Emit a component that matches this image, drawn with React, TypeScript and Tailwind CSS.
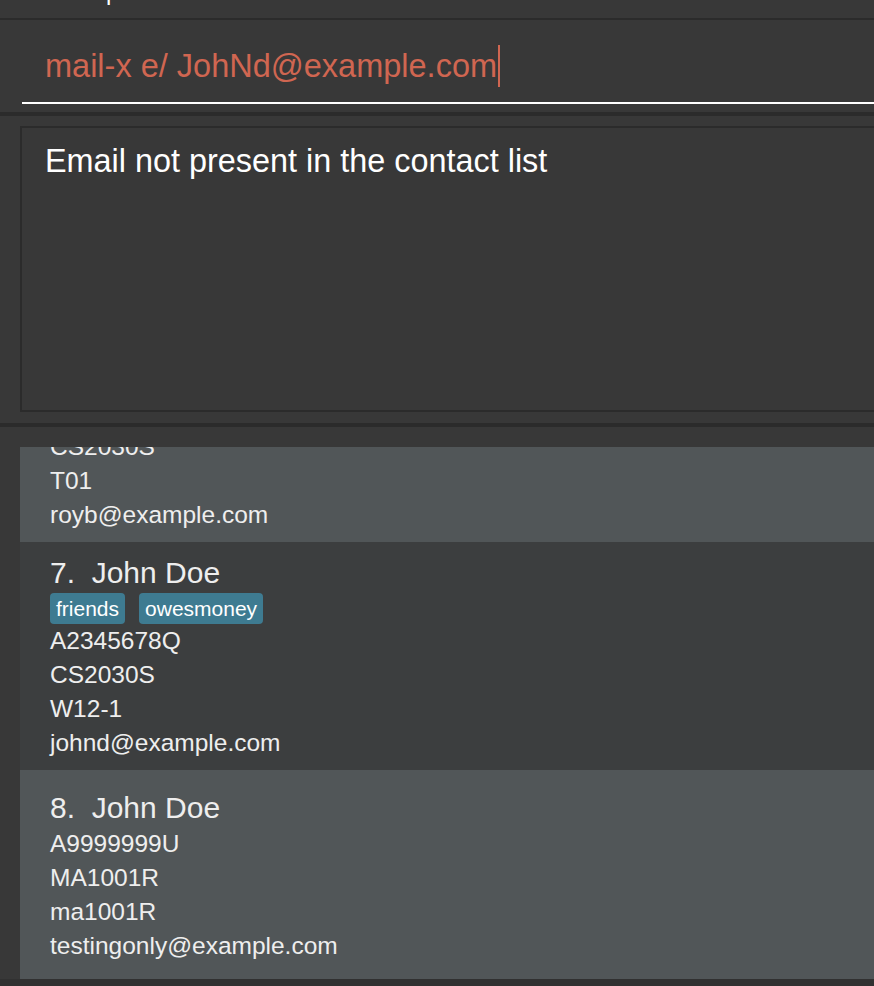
type Card = {
  index?: number;
  name?: string;
  tags?: string[];
  lines: string[];
  odd: boolean;
  className: string;
};

const cards: Card[] = [
  {
    lines: ["CS2030S", "T01", "royb@example.com"],
    odd: true,
    className: "-mt-[17px] pb-[10px]",
  },
  {
    index: 7,
    name: "John Doe",
    tags: ["friends", "owesmoney"],
    lines: ["A2345678Q", "CS2030S", "W12-1", "johnd@example.com"],
    odd: false,
    className: "pt-[13px] pb-[10px]",
  },
  {
    index: 8,
    name: "John Doe",
    lines: ["A9999999U", "MA1001R", "ma1001R", "testingonly@example.com"],
    odd: true,
    className: "pt-[20px] pb-[16px]",
  },
];

function PersonCard({ card }: { card: Card }) {
  return (
    <div
      className={`${card.odd ? "bg-[#515658]" : "bg-[#3c3e3f]"} pl-[30px] text-[#eeeeee] ${card.className}`}
    >
      {card.name && (
        <div className="whitespace-pre text-[30px] leading-[36px]">
          {`${card.index}.  ${card.name}`}
        </div>
      )}
      {card.tags && (
        <div className="mt-[2px] flex gap-[14px]">
          {card.tags.map((t) => (
            <span
              key={t}
              className="h-[31px] rounded-[4px] bg-[#3e7b91] px-[6px] text-[21px] leading-[31px] text-white"
            >
              {t}
            </span>
          ))}
        </div>
      )}
      <div className={card.name ? (card.tags ? "" : "mt-[1px]") : ""}>
        {card.lines.map((l, i) => (
          <div key={i} className="text-[24.5px] leading-[34px]">
            {l}
          </div>
        ))}
      </div>
    </div>
  );
}

export default function App() {
  return (
    <div className="flex h-[986px] w-full flex-col overflow-hidden bg-[#383838] font-['Liberation_Sans',Arial,sans-serif]">
      {/* menu bar, mostly scrolled off */}
      <div className="h-[18px] shrink-0 overflow-hidden pl-[70px]">
        <div className="-mt-[20px] text-[24px] leading-[24px] text-white">Help</div>
      </div>
      <div className="h-[2px] shrink-0 bg-[#2b2b2b]" />

      {/* command box */}
      <div className="h-[92px] shrink-0 pt-[25px]">
        <div className="ml-[22px] border-b-2 border-white pb-[15px]">
          <div className="flex items-center pl-[23px] text-[32.5px] leading-[40px] text-[#d06651]">
            <span className="whitespace-pre">mail-x e/ JohNd@example.com</span>
            <span className="ml-[1px] h-[42px] w-[1.5px] bg-[#d06651]" />
          </div>
        </div>
      </div>
      <div className="h-[4px] shrink-0 bg-[#2b2b2b]" />

      {/* result display */}
      <div className="shrink-0 pt-[10px] pb-[11px]">
        <div className="ml-[20px] h-[286px] border-2 border-r-0 border-[#2b2b2b] pl-[23px] pt-[13px]">
          <div className="text-[32.4px] leading-[40px] text-white">
            Email not present in the contact list
          </div>
        </div>
      </div>
      <div className="h-[4px] shrink-0 bg-[#2b2b2b]" />

      {/* person list */}
      <div className="flex min-h-0 flex-1 flex-col pt-[20px]">
        <div className="ml-[20px] flex-1 overflow-hidden">
          {cards.map((c, i) => (
            <PersonCard key={i} card={c} />
          ))}
        </div>
      </div>
      <div className="h-[7px] shrink-0 bg-[#313131]" />
    </div>
  );
}
